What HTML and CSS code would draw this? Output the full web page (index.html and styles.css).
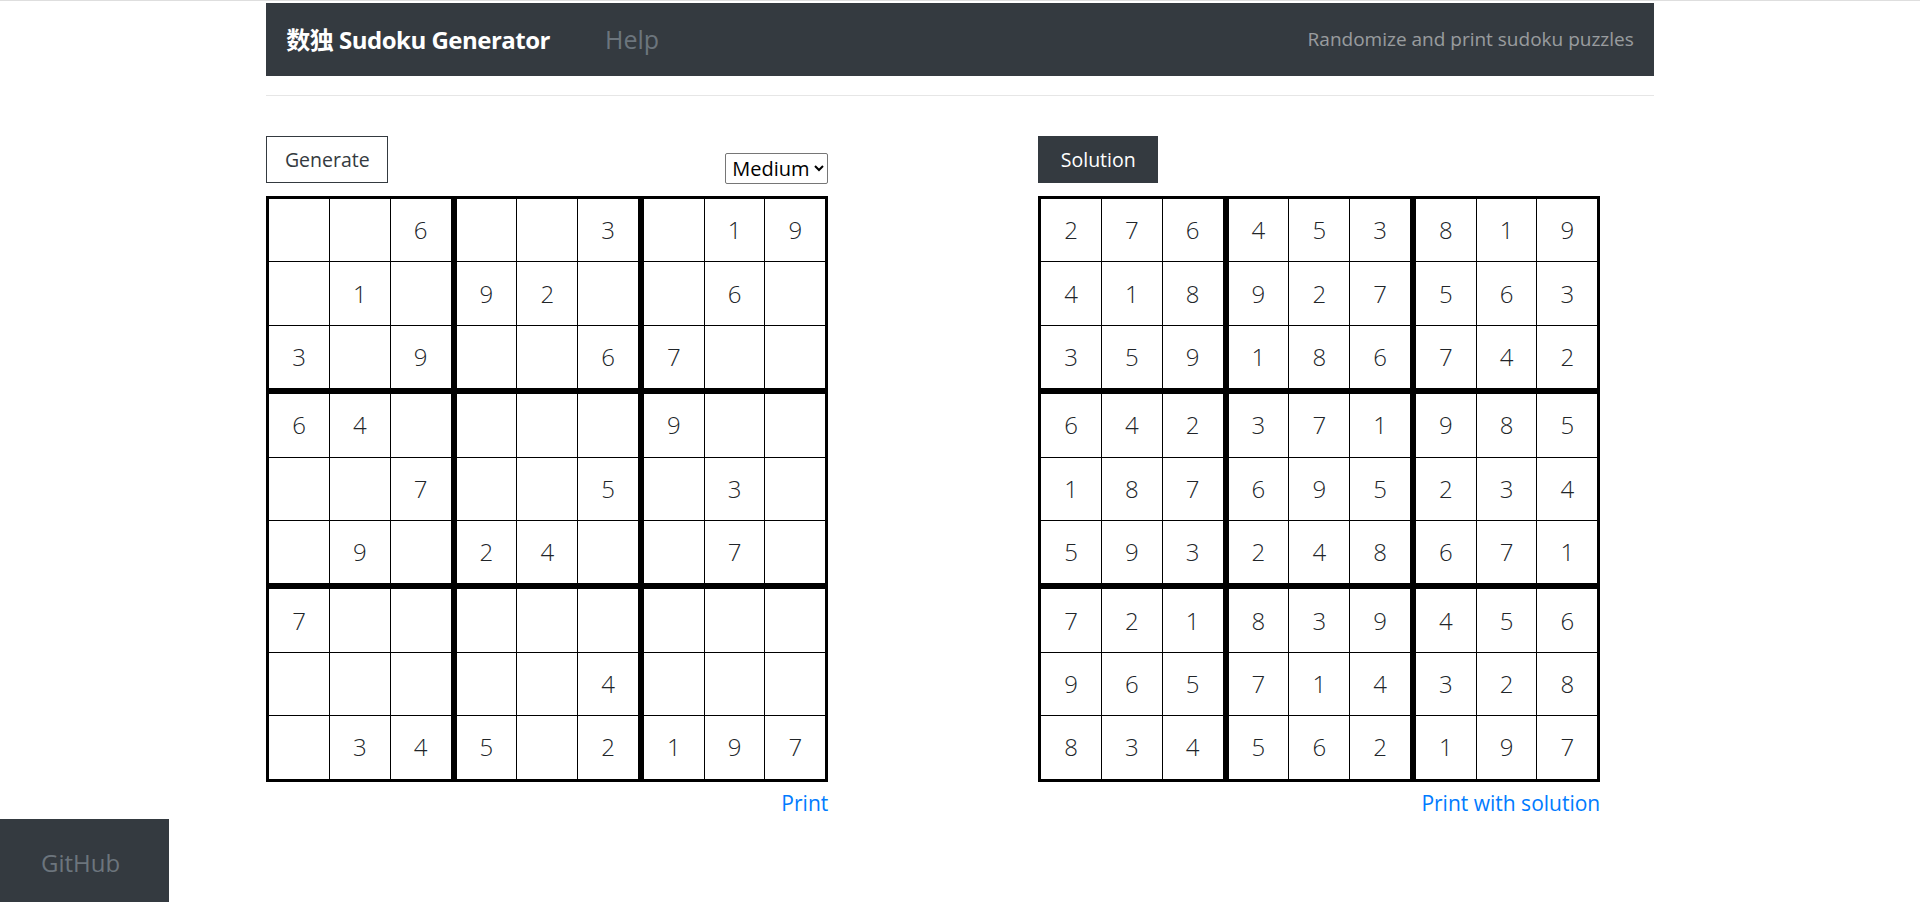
FILE: index.html
```html
<!DOCTYPE html>
<html lang="en">
<head>
<meta charset="utf-8">
<title>数独 Sudoku Generator</title>
<link rel="stylesheet" href="styles.css">
</head>
<body>
<div class="topline"></div>
<div class="container">
  <nav class="navbar">
    <a class="brand" href="#">数独 Sudoku Generator</a>
    <a class="nav-link" href="#">Help</a>
    <span class="navbar-text">Randomize and print sudoku puzzles</span>
  </nav>
  <hr class="divider">
  <main class="main">
    <section class="panel">
      <div class="toolbar">
        <button class="btn btn-outline">Generate</button>
        <select class="level">
          <option>Easy</option>
          <option selected>Medium</option>
          <option>Hard</option>
        </select>
      </div>
      <div class="sudoku">
        <div class="box"><div class="cell"></div><div class="cell"></div><div class="cell">6</div><div class="cell"></div><div class="cell">1</div><div class="cell"></div><div class="cell">3</div><div class="cell"></div><div class="cell">9</div></div>
        <div class="box"><div class="cell"></div><div class="cell"></div><div class="cell">3</div><div class="cell">9</div><div class="cell">2</div><div class="cell"></div><div class="cell"></div><div class="cell"></div><div class="cell">6</div></div>
        <div class="box"><div class="cell"></div><div class="cell">1</div><div class="cell">9</div><div class="cell"></div><div class="cell">6</div><div class="cell"></div><div class="cell">7</div><div class="cell"></div><div class="cell"></div></div>
        <div class="box"><div class="cell">6</div><div class="cell">4</div><div class="cell"></div><div class="cell"></div><div class="cell"></div><div class="cell">7</div><div class="cell"></div><div class="cell">9</div><div class="cell"></div></div>
        <div class="box"><div class="cell"></div><div class="cell"></div><div class="cell"></div><div class="cell"></div><div class="cell"></div><div class="cell">5</div><div class="cell">2</div><div class="cell">4</div><div class="cell"></div></div>
        <div class="box"><div class="cell">9</div><div class="cell"></div><div class="cell"></div><div class="cell"></div><div class="cell">3</div><div class="cell"></div><div class="cell"></div><div class="cell">7</div><div class="cell"></div></div>
        <div class="box"><div class="cell">7</div><div class="cell"></div><div class="cell"></div><div class="cell"></div><div class="cell"></div><div class="cell"></div><div class="cell"></div><div class="cell">3</div><div class="cell">4</div></div>
        <div class="box"><div class="cell"></div><div class="cell"></div><div class="cell"></div><div class="cell"></div><div class="cell"></div><div class="cell">4</div><div class="cell">5</div><div class="cell"></div><div class="cell">2</div></div>
        <div class="box"><div class="cell"></div><div class="cell"></div><div class="cell"></div><div class="cell"></div><div class="cell"></div><div class="cell"></div><div class="cell">1</div><div class="cell">9</div><div class="cell">7</div></div>
      </div>
      <div class="actions"><a class="link" href="#">Print</a></div>
    </section>
    <section class="panel panel-right">
      <div class="toolbar">
        <button class="btn btn-dark">Solution</button>
      </div>
      <div class="sudoku">
        <div class="box"><div class="cell">2</div><div class="cell">7</div><div class="cell">6</div><div class="cell">4</div><div class="cell">1</div><div class="cell">8</div><div class="cell">3</div><div class="cell">5</div><div class="cell">9</div></div>
        <div class="box"><div class="cell">4</div><div class="cell">5</div><div class="cell">3</div><div class="cell">9</div><div class="cell">2</div><div class="cell">7</div><div class="cell">1</div><div class="cell">8</div><div class="cell">6</div></div>
        <div class="box"><div class="cell">8</div><div class="cell">1</div><div class="cell">9</div><div class="cell">5</div><div class="cell">6</div><div class="cell">3</div><div class="cell">7</div><div class="cell">4</div><div class="cell">2</div></div>
        <div class="box"><div class="cell">6</div><div class="cell">4</div><div class="cell">2</div><div class="cell">1</div><div class="cell">8</div><div class="cell">7</div><div class="cell">5</div><div class="cell">9</div><div class="cell">3</div></div>
        <div class="box"><div class="cell">3</div><div class="cell">7</div><div class="cell">1</div><div class="cell">6</div><div class="cell">9</div><div class="cell">5</div><div class="cell">2</div><div class="cell">4</div><div class="cell">8</div></div>
        <div class="box"><div class="cell">9</div><div class="cell">8</div><div class="cell">5</div><div class="cell">2</div><div class="cell">3</div><div class="cell">4</div><div class="cell">6</div><div class="cell">7</div><div class="cell">1</div></div>
        <div class="box"><div class="cell">7</div><div class="cell">2</div><div class="cell">1</div><div class="cell">9</div><div class="cell">6</div><div class="cell">5</div><div class="cell">8</div><div class="cell">3</div><div class="cell">4</div></div>
        <div class="box"><div class="cell">8</div><div class="cell">3</div><div class="cell">9</div><div class="cell">7</div><div class="cell">1</div><div class="cell">4</div><div class="cell">5</div><div class="cell">6</div><div class="cell">2</div></div>
        <div class="box"><div class="cell">4</div><div class="cell">5</div><div class="cell">6</div><div class="cell">3</div><div class="cell">2</div><div class="cell">8</div><div class="cell">1</div><div class="cell">9</div><div class="cell">7</div></div>
      </div>
      <div class="actions"><a class="link" href="#">Print with solution</a></div>
    </section>
  </main>
</div>
<a class="github" href="#">GitHub</a>
</body>
</html>
```

FILE: styles.css
```css
* { box-sizing: border-box; }

html, body {
  margin: 0;
  padding: 0;
  background: #fff;
}

body {
  font-family: "Open Sans", "Noto Sans CJK SC", sans-serif;
  color: #212529;
  font-size: 20px;
  line-height: 1.5;
}

a { text-decoration: none; }

.topline {
  height: 2px;
  border-top: 1px solid #dedede;
}

.container {
  width: 1425px;
  margin: 0 auto;
  padding: 0 18.75px;
}

.navbar {
  display: flex;
  align-items: center;
  height: 73px;
  margin-top: 1px;
  padding: 0 20px;
  background: #343a40;
}

.brand {
  color: #fff;
  font-weight: 700;
  font-size: 24px;
  font-family: "Open Sans", "Noto Sans CJK SC", sans-serif;
  letter-spacing: -0.5px;
}

.nav-link {
  margin-left: 55px;
  color: #6c757d;
  font-size: 25px;
}

.navbar-text {
  margin-left: auto;
  color: rgba(255, 255, 255, 0.5);
  font-size: 19px;
}

.divider {
  margin: 19px 0 0;
  border: 0;
  height: 1px;
  background: #e6e6e6;
}

.main {
  display: flex;
  padding-top: 40px;
}

.panel {
  width: 562px;
}

.panel-right {
  margin-left: 210px;
}

.toolbar {
  display: flex;
  justify-content: space-between;
  align-items: flex-end;
  height: 47px;
  margin-bottom: 13px;
}

.btn {
  height: 47px;
  padding: 0 16px;
  font-family: "Open Sans", sans-serif;
  font-size: 19.5px;
  border-radius: 0;
  cursor: pointer;
}

.btn-outline {
  width: 122px;
  background: #fff;
  color: #343a40;
  border: 1px solid #343a40;
}

.btn-dark {
  width: 120px;
  background: #343a40;
  color: #fff;
  border: 1px solid #343a40;
}

.level {
  width: 103px;
  height: 31px;
  margin-bottom: -1px;
  font-family: "Open Sans", sans-serif;
  font-size: 20px;
  color: #000;
  background: #fff;
  border: 1px solid #767676;
  border-radius: 2px;
  padding: 0 2px;
}

.sudoku {
  display: grid;
  grid-template-columns: repeat(3, 1fr);
  width: 562px;
}

.box {
  display: grid;
  grid-template-columns: repeat(3, 1fr);
  grid-auto-rows: 62.4px;
  gap: 1px;
  background: #000;
  border: 3px solid #000;
}

.cell {
  display: flex;
  align-items: center;
  justify-content: center;
  background: #fff;
  font-size: 24px;
  font-weight: 350;
  color: #212529;
}

.actions {
  display: flex;
  justify-content: flex-end;
  margin-top: 6px;
}

.link {
  color: #007bff;
  font-size: 21px;
}

.github {
  position: fixed;
  left: 0;
  bottom: 0;
  width: 169px;
  height: 83px;
  display: flex;
  align-items: center;
  padding: 4px 0 0 41px;
  background: #343a40;
  color: #6c757d;
  font-size: 24px;
}
```
